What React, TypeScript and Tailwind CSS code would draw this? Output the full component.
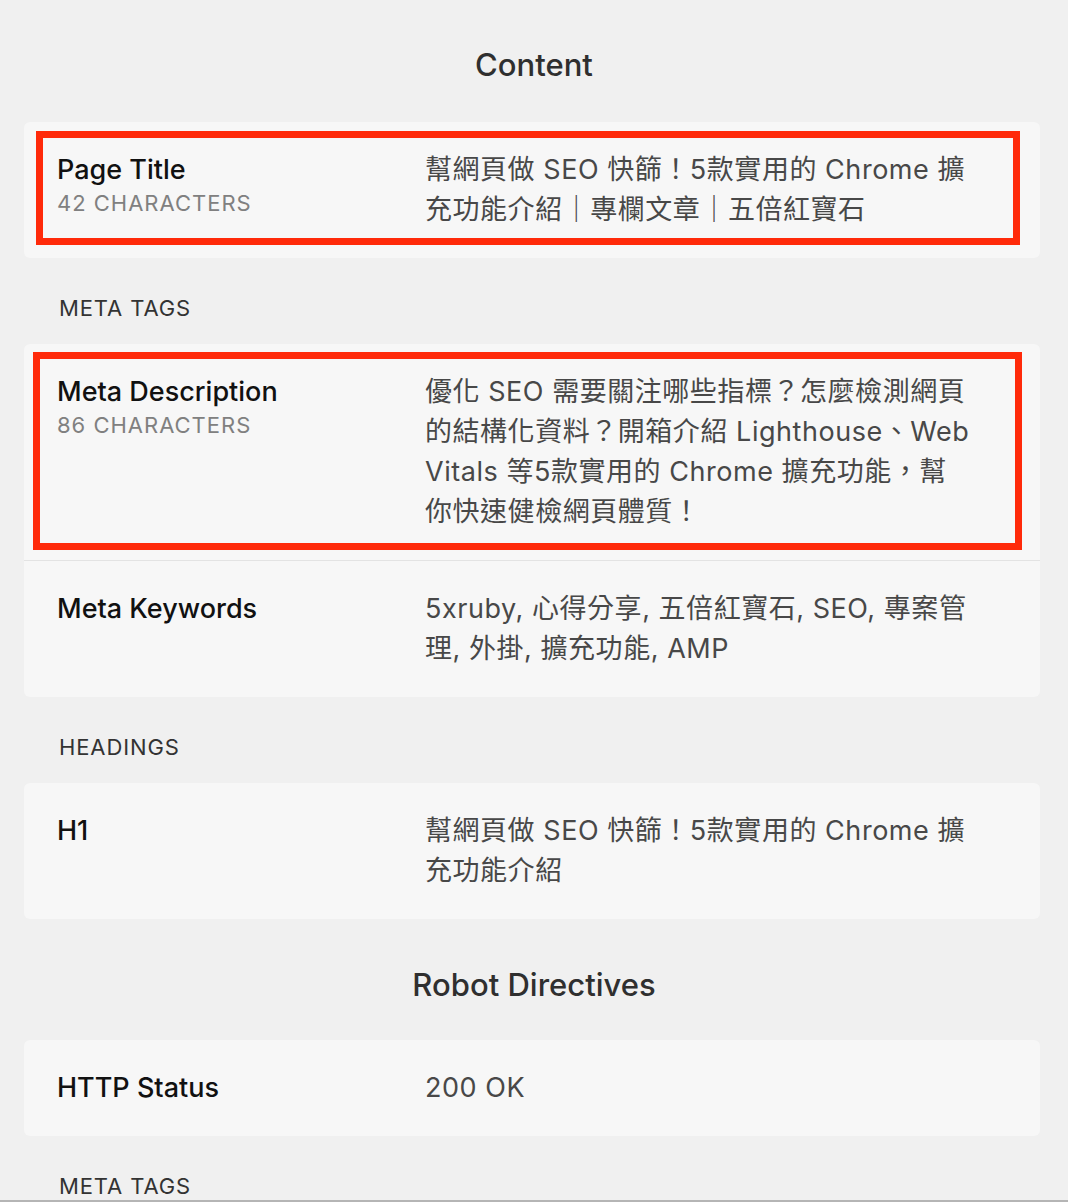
const font = { fontFamily: "Inter, 'Noto Sans CJK TC', sans-serif" };

type Row = {
  label: string;
  sub?: string;
  value: string;
  marked?: "a" | "b";
};

const Highlight = ({ kind }: { kind: "a" | "b" }) =>
  kind === "a" ? (
    <div className="pointer-events-none absolute left-[12px] top-[9px] right-[20px] bottom-[13px] border-[7px] border-[#ff2a0a]" />
  ) : (
    <div className="pointer-events-none absolute left-[9px] top-[8px] right-[18px] bottom-[10px] border-[7px] border-[#ff2a0a]" />
  );

const InfoRow = ({ row }: { row: Row }) => (
  <div className="relative grid grid-cols-[368px_1fr] py-7 pl-[33px] pr-[68px]">
    <div>
      <div className="text-[27px] leading-[40px] font-medium text-[#111]">{row.label}</div>
      {row.sub && (
        <div className="text-[22px] leading-[26px] tracking-[0.045em] text-[#808080]">{row.sub}</div>
      )}
    </div>
    <div className="text-[27px] leading-[40px] tracking-[0.02em] text-[#484848]">{row.value}</div>
    {row.marked && <Highlight kind={row.marked} />}
  </div>
);

const Card = ({ rows }: { rows: Row[] }) => (
  <div className="ml-6 mr-7 rounded-md bg-[#f7f7f7] divide-y divide-[#e3e3e3]">
    {rows.map((r) => (
      <InfoRow key={r.label} row={r} />
    ))}
  </div>
);

const SectionLabel = ({ children }: { children: string }) => (
  <div className="mt-9 mb-[22px] pl-[59px] text-[22px] leading-[28px] tracking-[0.04em] text-[#333]">{children}</div>
);

const Heading = ({ children }: { children: string }) => (
  <h2 className="text-center text-[31px] leading-[40px] font-medium text-[#2f2f2f]">{children}</h2>
);

export default function App() {
  return (
    <div style={font} className="h-[1202px] overflow-hidden bg-[#f0f0f0] border-b-2 border-[#b5b5b5]">
      <div className="pt-[45px]">
        <Heading>Content</Heading>
        <div className="mt-[37px]">
          <Card
            rows={[
              {
                label: "Page Title",
                sub: "42 CHARACTERS",
                value: "幫網頁做 SEO 快篩！5款實用的 Chrome 擴充功能介紹｜專欄文章｜五倍紅寶石",
                marked: "a",
              },
            ]}
          />
        </div>

        <SectionLabel>META TAGS</SectionLabel>
        <Card
          rows={[
            {
              label: "Meta Description",
              sub: "86 CHARACTERS",
              value:
                "優化 SEO 需要關注哪些指標？怎麼檢測網頁的結構化資料？開箱介紹 Lighthouse、Web Vitals 等5款實用的 Chrome 擴充功能，幫你快速健檢網頁體質！",
              marked: "b",
            },
            {
              label: "Meta Keywords",
              value: "5xruby, 心得分享, 五倍紅寶石, SEO, 專案管理, 外掛, 擴充功能, AMP",
            },
          ]}
        />

        <SectionLabel>HEADINGS</SectionLabel>
        <Card rows={[{ label: "H1", value: "幫網頁做 SEO 快篩！5款實用的 Chrome 擴充功能介紹" }]} />

        <div className="mt-[46px] mb-[35px]">
          <Heading>Robot Directives</Heading>
        </div>
        <Card rows={[{ label: "HTTP Status", value: "200 OK" }]} />

        <SectionLabel>META TAGS</SectionLabel>
      </div>
    </div>
  );
}
